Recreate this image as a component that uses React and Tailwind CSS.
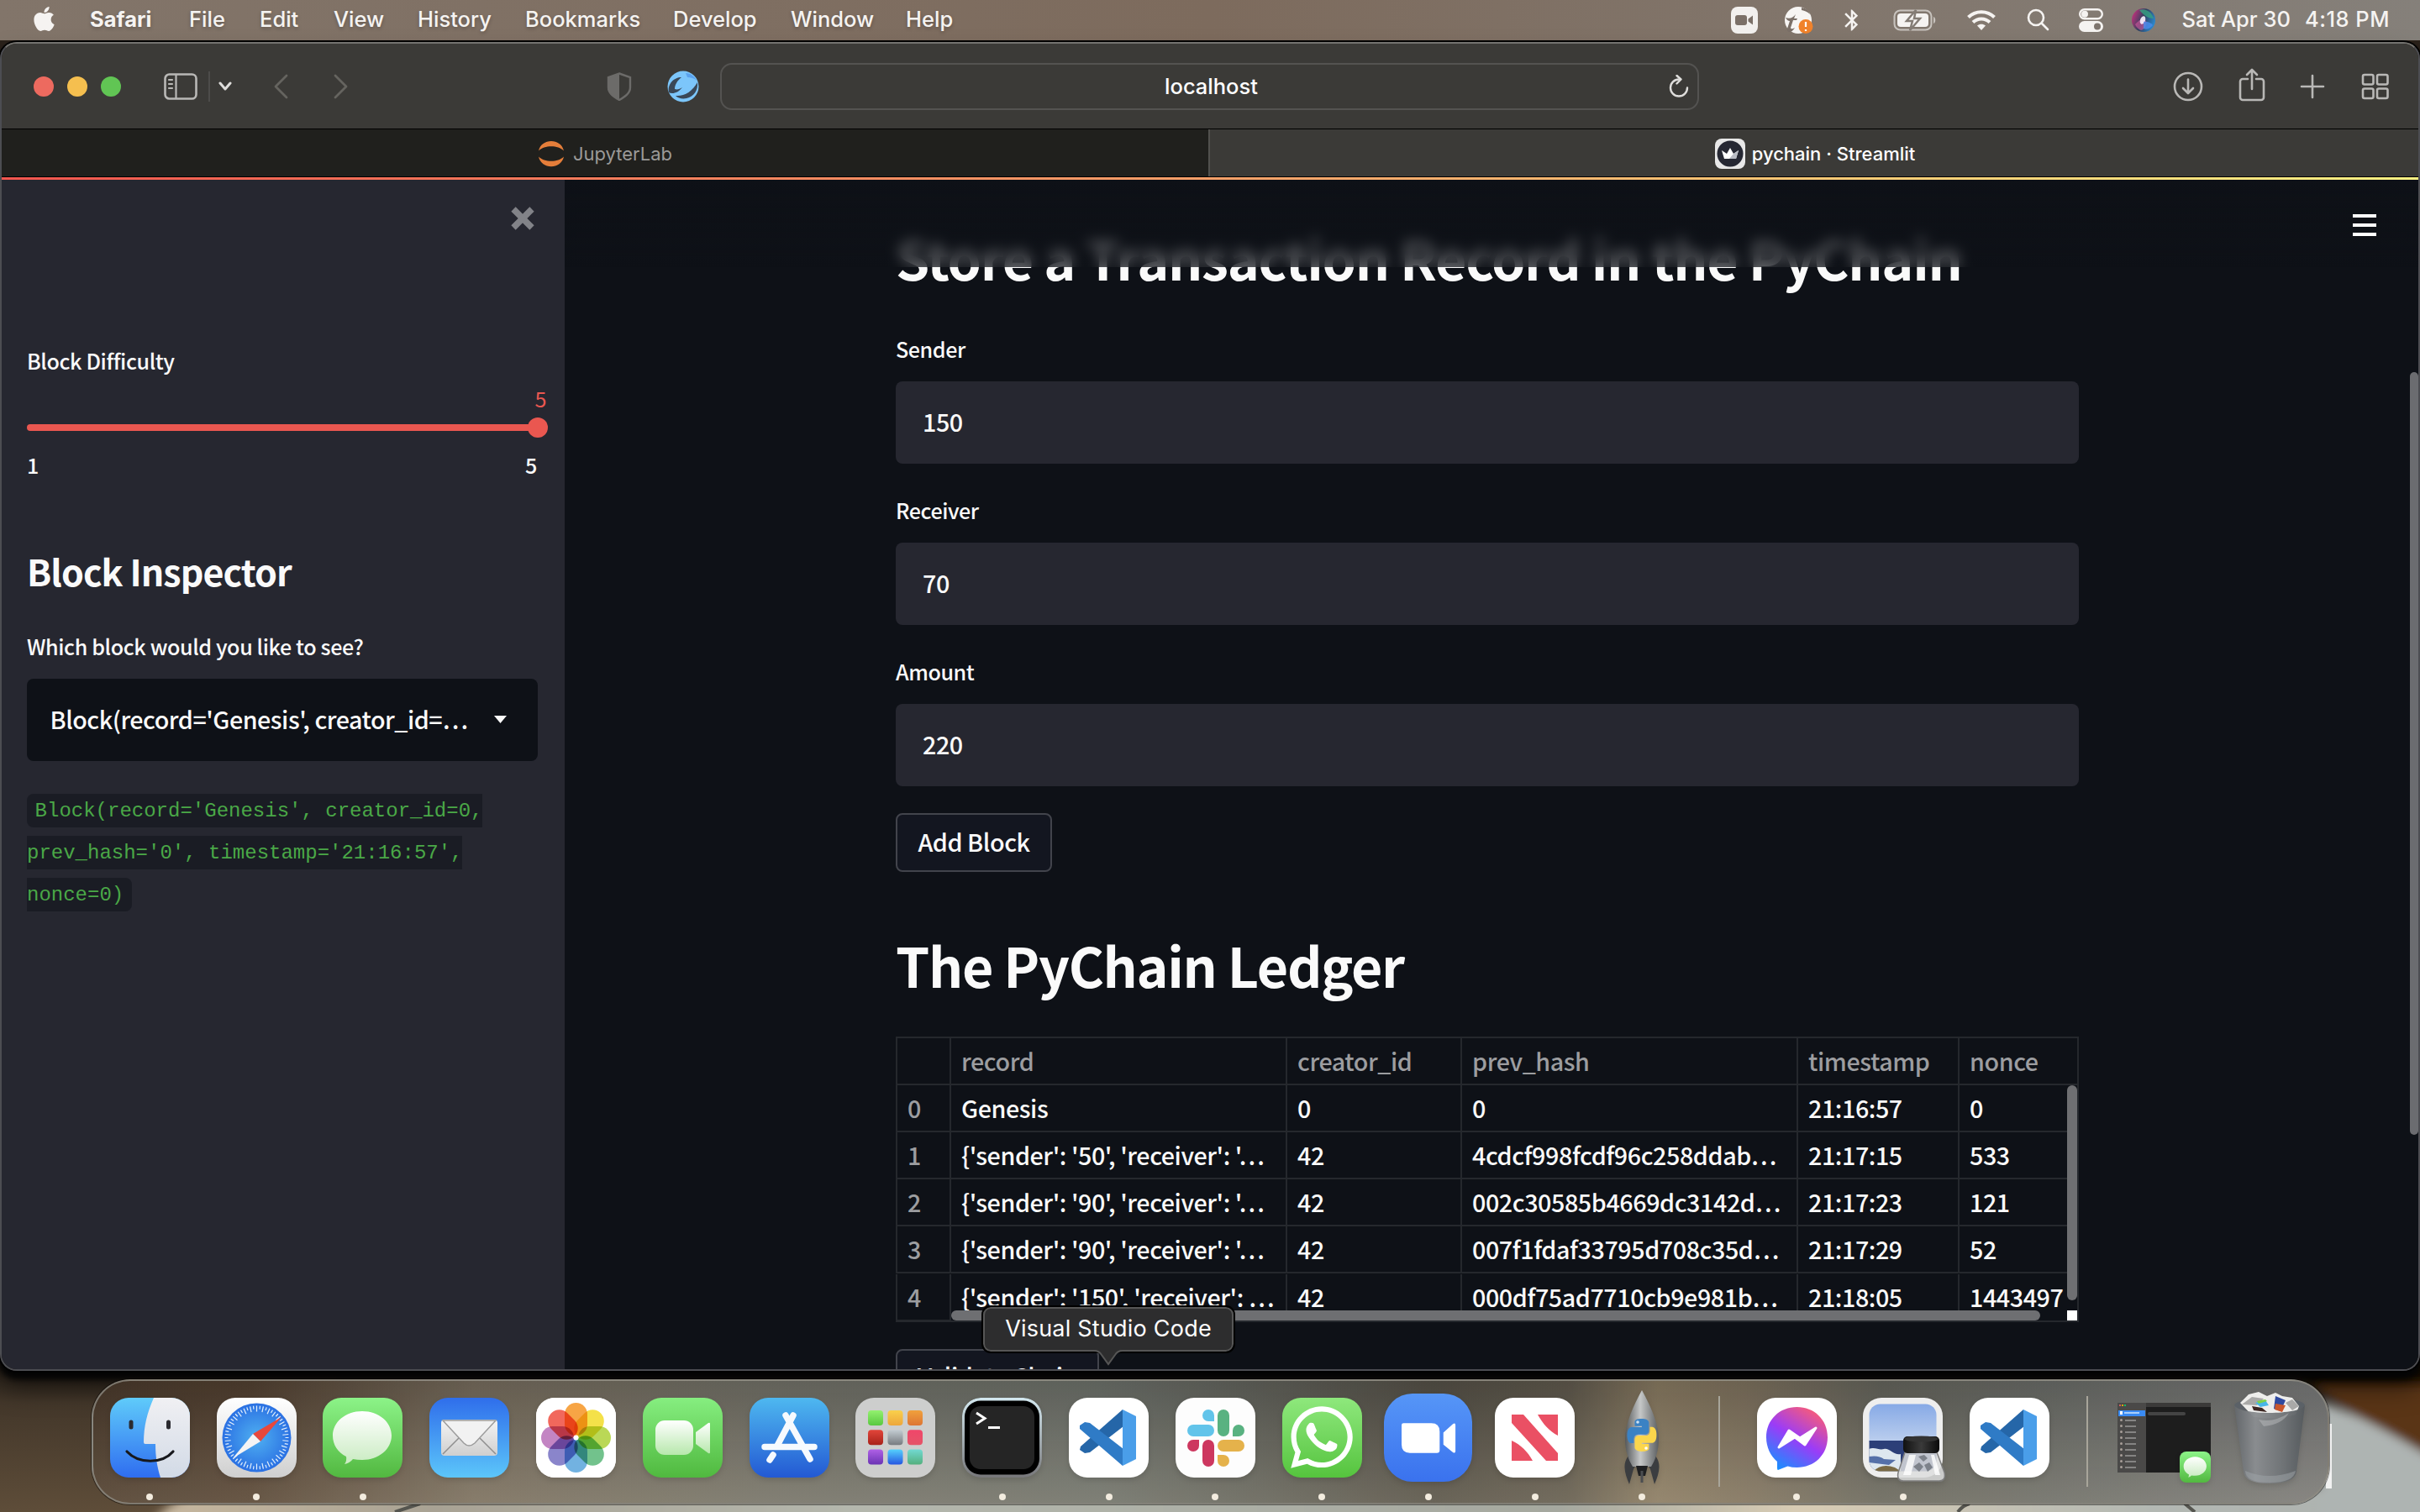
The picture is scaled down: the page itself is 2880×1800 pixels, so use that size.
import React from "react";
import { FaApple, FaWhatsapp } from "react-icons/fa";
import { MdBluetooth } from "react-icons/md";

const SANS = "font-['Noto_Sans_CJK_SC',sans-serif] font-medium tracking-[-0.015em]";

/* ---------- macOS menu bar ---------- */

const MENU = [
  ["Safari", "w-[118px] font-bold"],
  ["File", "w-[84px]"],
  ["Edit", "w-[88px]"],
  ["View", "w-[100px]"],
  ["History", "w-[128px]"],
  ["Bookmarks", "w-[176px]"],
  ["Develop", "w-[140px]"],
  ["Window", "w-[137px]"],
  ["Help", "w-[80px]"],
];

function MenuBar() {
  return (
    <header className="flex h-[48px] items-center bg-linear-to-r from-[#82756a] via-[#7d6b5d] to-[#85807a] pl-[40px] pr-[36px] pb-[1px] font-['Inter',sans-serif] text-[25.500px] font-medium text-[#f5f3f1]">
      <FaApple className="mb-[3px] size-[33px] -ml-[4px] mr-[38px]" />
      <nav className="flex [text-shadow:0_2px_4px_rgba(0,0,0,0.25)]">
        {MENU.map(([t, c]) => (
          <span key={t} className={c}>{t}</span>
        ))}
      </nav>
      <div className="ml-auto flex items-center">
        <svg width="32" height="32" viewBox="0 0 32 32" className="mr-[32px]">
          <rect width="32" height="32" rx="8" fill="#f2f0ee" />
          <rect x="5" y="10" width="14" height="12" rx="3" fill="#7b7068" />
          <path d="M20.500 14.500 26 10.500v11l-5.500-4z" fill="#7b7068" />
        </svg>
        <svg width="34" height="34" viewBox="0 0 34 34" className="mr-[31px]">
          <circle cx="16" cy="17" r="16" fill="#f7f5f3" />
          <path d="M20 2c6 1 9 4 10 8-3-3-6-4-10-5z" fill="#7b7068" />
          <path d="M1 14c5 2 9 0 12-4l-2 5h4l-1 2h-4l-3 9q0 2 3 1l2-1q-3 5-6 5-4 0-3-4l3-9q-3 0-5-4z" fill="#7b7068" />
          <circle cx="25" cy="24.500" r="8.500" fill="#f0822b" />
          <path d="M25 19v6M25 28v2" stroke="#fff" strokeWidth="2.200" />
        </svg>
        <MdBluetooth className="mr-[34px] h-[32px] w-[30px]" />
        <svg width="52" height="26" viewBox="0 0 52 26" className="mr-[36px]">
          <rect x="1.500" y="1.500" width="44" height="23" rx="7" fill="none" stroke="#c8c3be" strokeWidth="2" />
          <rect x="5" y="5" width="37" height="16" rx="4" fill="#f5f3f1" />
          <path d="M48 9c3 1 3 7 0 8z" fill="#c8c3be" />
          <path d="M27 1 16 14h7l-3 11 12-14h-7z" fill="#f5f3f1" stroke="#847c75" strokeWidth="2.500" />
        </svg>
        <svg width="34" height="26" viewBox="0 0 34 26" className="mr-[37px]" fill="none" stroke="#f5f3f1" strokeWidth="4">
          <path d="M1.500 9.500C10 1 24 1 32.500 9.500" />
          <path d="M7 15.500c5.500-5.500 14.500-5.500 20 0" />
          <path d="M12 19.500c3-2.500 7-2.500 10 0l-5 5.500z" fill="#f5f3f1" stroke="none" />
        </svg>
        <svg width="27" height="27" viewBox="0 0 27 27" className="mr-[35px]" fill="none" stroke="#f5f3f1" strokeWidth="2.600" strokeLinecap="round">
          <circle cx="11" cy="11" r="9" />
          <path d="m18 18 7 7" />
        </svg>
        <svg width="29" height="28" viewBox="0 0 29 28" className="mr-[33px]">
          <rect x="1.200" y="1.200" width="26.600" height="11" rx="5.500" fill="none" stroke="#f5f3f1" strokeWidth="2.400" />
          <circle cx="7" cy="6.700" r="4" fill="#f5f3f1" />
          <rect y="15" width="29" height="13" rx="6.500" fill="#f5f3f1" />
          <circle cx="22" cy="21.500" r="4" fill="#7e756e" />
        </svg>
        <svg width="30" height="30" viewBox="0 0 30 30" className="mr-[31px]">
          <defs>
            <linearGradient id="siri" x1="0" y1="0.300" x2="1" y2="0.700">
              <stop offset="0" stopColor="#c0327c" />
              <stop offset="0.450" stopColor="#32405e" />
              <stop offset="1" stopColor="#2a8fd8" />
            </linearGradient>
          </defs>
          <circle cx="15" cy="15" r="14" fill="url(#siri)" />
          <path d="M10 3c8-3 15 3 17 10-6 0-11-3-17-10z" fill="#36a383" opacity="0.800" />
          <path d="M5 20c5-6 10-8 13-4 2 4-2 10-6 11-3-1-6-4-7-7z" fill="#d9579f" opacity="0.600" />
          <ellipse cx="14" cy="15" rx="3" ry="5" fill="#fbf4ff" opacity="0.900" transform="rotate(20 14 15)" />
          <path d="M15 17c4-1 9 1 11 4-3 4-8 6-11 4z" fill="#4b8df0" opacity="0.800" />
        </svg>
        <span className="mr-[17px]">Sat Apr 30</span>
        <span className="tracking-[0.020em]">4:18 PM</span>
      </div>
    </header>
  );
}

/* ---------- Safari chrome ---------- */

function Toolbar() {
  const line = { fill: "none", stroke: "#b9b8b6", strokeWidth: 2.6, strokeLinecap: "round", strokeLinejoin: "round" };
  return (
    <div className="flex h-[102px] items-center border-b border-black bg-[#3b3a37] pl-[38px] pr-[34px]">
      <div className="flex gap-[16px]">
        <i className="size-[24px] rounded-full bg-[#ed6a5f]" />
        <i className="size-[24px] rounded-full bg-[#f5bf4f]" />
        <i className="size-[24px] rounded-full bg-[#61c554]" />
      </div>
      <svg width="40" height="32" viewBox="0 0 40 32" className="ml-[51px]" {...line}>
        <rect x="1.500" y="1.500" width="37" height="29" rx="5" />
        <path d="M14.500 2v28M6 8h4M6 13h4M6 18h4" strokeWidth="2.200" />
      </svg>
      <i className="ml-[13px] h-[36px] w-[2px] bg-[#4d4c4a]" />
      <svg width="16" height="12" viewBox="0 0 16 12" className="ml-[10px]" fill="none" stroke="#dedddb" strokeWidth="3" strokeLinecap="round" strokeLinejoin="round">
        <path d="m2 2 6 7 6-7" />
      </svg>
      <svg width="18" height="30" viewBox="0 0 18 30" className="ml-[49px]" fill="none" stroke="#65645f" strokeWidth="2.800" strokeLinecap="round" strokeLinejoin="round">
        <path d="M16 2 3 15l13 13" />
      </svg>
      <svg width="18" height="30" viewBox="0 0 18 30" className="ml-[54px]" fill="none" stroke="#65645f" strokeWidth="2.800" strokeLinecap="round" strokeLinejoin="round">
        <path d="m2 2 13 13L2 28" />
      </svg>
      <svg width="30" height="34" viewBox="0 0 30 34" className="ml-[307px]">
        <path d="M15 1.500 28 6v12c0 7-6 11-13 15C8 29 2 25 2 18V6z" fill="none" stroke="#6c6b69" strokeWidth="2.400" />
        <path d="M15 1.500V33C8 29 2 25 2 18V6z" fill="#6c6b69" />
      </svg>
      <svg width="38" height="38" viewBox="0 0 38 38" className="ml-[42px]">
        <circle cx="19" cy="19" r="18.500" fill="#7cc6fb" />
        <path d="M2 26C0 16 8 8 17 8c-5 4-8 9-8 14 3 1 6 0 9-2-4 5-8 7-12 7q-3 0-4-1z" fill="#3a4858" />
        <path d="M36 14c1 9-4 17-13 19-5 1-10 0-13-3 10 1 20-5 26-16z" fill="#3a4858" />
        <path d="M22 3c6 0 11 4 13 9-3-3-7-4-11-4z" fill="#5aa2ee" />
      </svg>
      <div className="ml-[25px] flex h-[56px] w-[1165px] items-center rounded-[14px] border-2 border-[#545351] font-['Inter',sans-serif] text-[25.500px] font-medium text-white">
        <span className="w-[38px]" />
        <span className="flex-1 pt-[2px] text-center">localhost</span>
        <svg width="24" height="28" viewBox="0 0 24 28" className="mr-[10px]" fill="none" stroke="#dedddb" strokeWidth="2.400" strokeLinecap="round" strokeLinejoin="round">
          <path d="M12 5.500a10 10 0 1 0 10 10" />
          <path d="m9.500 1 5 4.500-5 5" />
        </svg>
      </div>
      <div className="ml-auto flex items-center">
        <svg width="36" height="36" viewBox="0 0 36 36" {...line}>
          <circle cx="18" cy="18" r="16" />
          <path d="M18 9.500v16M12 20l6 6 6-6" />
        </svg>
        <svg width="32" height="40" viewBox="0 0 32 40" className="mb-[3px] ml-[42px]" {...line}>
          <path d="M11 13H5a3 3 0 0 0-3 3v19a3 3 0 0 0 3 3h22a3 3 0 0 0 3-3V16a3 3 0 0 0-3-3h-6M16 25V2M10 8l6-6 6 6" />
        </svg>
        <svg width="30" height="30" viewBox="0 0 30 30" className="ml-[41px]" {...line}>
          <path d="M15 2v26M2 15h26" />
        </svg>
        <svg width="34" height="32" viewBox="0 0 34 32" className="ml-[43px]" {...line}>
          <rect x="2" y="2" width="12.500" height="11.500" rx="2" />
          <rect x="19" y="2" width="12.500" height="11.500" rx="2" />
          <rect x="2" y="18.500" width="12.500" height="11.500" rx="2" />
          <rect x="19" y="18.500" width="12.500" height="11.500" rx="2" />
        </svg>
      </div>
    </div>
  );
}

function TabStrip() {
  return (
    <div className="flex h-[57px] border-b border-black font-['Inter',sans-serif] text-[22px]">
      <div className="flex w-[1436px] items-center justify-center bg-[#20201d] pt-[2px] text-[#9b9a98]">
        <svg width="32" height="32" viewBox="0 0 32 32" className="mr-[10px]">
          <path d="M1 12.500C4-3 28-3 31 12.500 24 5.500 8 5.500 1 12.500zM1 19.500C4 35 28 35 31 19.500 24 26.500 8 26.500 1 19.500z" fill="#e57e3a" />
        </svg>
        <span>JupyterLab</span>
      </div>
      <div className="flex flex-1 items-center justify-center border-l-2 border-[#52514e] bg-[#3b3a37] pt-[2px] pl-[2px] font-medium text-white">
        <svg width="36" height="36" viewBox="0 0 36 36" className="mr-[8px]">
          <rect width="36" height="36" rx="8" fill="#e8e8e8" />
          <circle cx="18" cy="18" r="15.500" fill="#262833" />
          <path d="m8 14 6 4 4-7 4 7 6-4-3 10H11z" fill="#fff" />
          <path d="M28 14l-6 4-5 6h8z" fill="#b9bcc4" />
        </svg>
        <span>pychain · Streamlit</span>
      </div>
    </div>
  );
}

/* ---------- Streamlit app ---------- */

function Sidebar() {
  return (
    <aside className={`${SANS} flex w-[670px] shrink-0 flex-col bg-[#262730] pl-[30px] pr-[32px] text-[25.100px] text-[#fafafa]`}>
      <div className="flex h-[92px] items-center justify-end pr-[4px]">
        <svg width="28" height="28" viewBox="0 0 28 28" stroke="#828388" strokeWidth="7.500">
          <path d="m3 3 22 22M25 3 3 25" />
        </svg>
      </div>
      <div className="mt-[103px] h-[40px] leading-[40px]">Block Difficulty</div>
      <div className="mt-[5px] -mr-[10px] h-[40px] text-right leading-[40px] font-normal text-[#ea5750]">5</div>
      <div className="mt-[3px] flex h-[24px] items-center">
        <div className="h-[8px] flex-1 rounded-l-[4px] bg-[#ea5750]" />
        <div className="-mr-[12px] -ml-[12px] size-[24px] rounded-full bg-[#ea5750]" />
      </div>
      <div className="mt-[12px] flex h-[40px] justify-between pr-[1px] leading-[40px]">
        <span>1</span>
        <span>5</span>
      </div>
      <h2 className="mt-[76px] h-[60px] text-[43px] leading-[60px] font-bold tracking-[-0.022em]">Block Inspector</h2>
      <div className="mt-[40px] h-[40px] leading-[40px]">Which block would you like to see?</div>
      <div className="mt-[19px] flex h-[98px] items-center justify-between rounded-[8px] bg-[#0e1117] pr-[37px] pb-[2px] pl-[27.500px] text-[28.700px] tracking-[-0.017em]">
        <span>Block(record='Genesis', creator_id=…</span>
        <svg width="15" height="9" viewBox="0 0 15 9">
          <path d="M0 0h15L7.500 9z" fill="#fafafa" />
        </svg>
      </div>
      <p className="mt-[35px] font-['Liberation_Mono',monospace] text-[24px] leading-[50px] font-normal tracking-normal">
        <code className="rounded-[8px] bg-[#1a1c24] px-[9.600px] pt-[7px] pb-[6px] font-['Liberation_Mono',monospace] text-[#4aa847]">
          Block(record='Genesis', creator_id=0, prev_hash='0', timestamp='21:16:57', nonce=0)
        </code>
      </p>
    </aside>
  );
}

function Field({ label, value, className }) {
  return (
    <div className={className}>
      <div className="h-[40px] text-[25.100px] leading-[40px]">{label}</div>
      <div className="mt-[19px] flex h-[98px] items-center rounded-[8px] bg-[#262730] pb-[3px] pl-[32px]">{value}</div>
    </div>
  );
}

const ROWS = [
  ["0", "Genesis", "0", "0", "21:16:57", "0"],
  ["1", "{'sender': '50', 'receiver': '…", "42", "4cdcf998fcdf96c258ddab…", "21:17:15", "533"],
  ["2", "{'sender': '90', 'receiver': '…", "42", "002c30585b4669dc3142d…", "21:17:23", "121"],
  ["3", "{'sender': '90', 'receiver': '…", "42", "007f1fdaf33795d708c35d…", "21:17:29", "52"],
  ["4", "{'sender': '150', 'receiver': …", "42", "000df75ad7710cb9e981b…", "21:18:05", "1443497"],
];

function Ledger() {
  const grid = "grid grid-cols-[64px_400px_208px_400px_192px_142px] h-[56px] leading-[54px] last-of-type:leading-[56px] whitespace-nowrap";
  const cell = "border-l-2 border-b-2 border-[#25282d] pl-[12px]";
  return (
    <div className="relative mt-[46px] h-[340px] w-[1408px] overflow-hidden border-2 border-l-0 border-[#25282d]">
      <div className={`${grid} text-[#9c9da0]`}>
        {["", "record", "creator_id", "prev_hash", "timestamp", "nonce"].map((h) => (
          <div key={h} className={cell}>{h}</div>
        ))}
      </div>
      {ROWS.map((row) => (
        <div key={row[0]} className={row[0] === "4" ? `${grid} pt-[1px]` : grid}>
          {row.map((v, i) => (
            <div key={i} className={i === 0 ? `${cell} text-[#9c9da0]` : cell}>{v}</div>
          ))}
        </div>
      ))}
      <div className="absolute top-[56px] right-0 h-[256px] w-[12px] rounded-full bg-[#6e6f72]" />
      <div className="absolute bottom-0 left-[66px] h-[12px] w-[1340px] bg-[#0e1117]" />
      <div className="absolute bottom-0 left-[66px] h-[12px] w-[1296px] rounded-full bg-[#6e6f72]" />
      <div className="absolute right-0 bottom-0 size-[12px] bg-white" />
    </div>
  );
}

function Main() {
  return (
    <main className={`${SANS} relative flex-1 overflow-hidden bg-[#0e1117] pt-[52px] pl-[394px] text-[28.700px] text-[#fafafa]`}>
      <div className="flex w-[1408px] flex-col">
        <h1 className="h-[80px] text-[64.500px] leading-[80px] font-bold tracking-[-0.020em] whitespace-nowrap">
          Store a Transaction Record in the PyChain
        </h1>
        <Field className="mt-[49px]" label="Sender" value="150" />
        <Field className="mt-[35px]" label="Receiver" value="70" />
        <Field className="mt-[35px]" label="Amount" value="220" />
        <button className="mt-[32px] flex h-[70px] w-[186px] items-center justify-center rounded-[8px] border-2 border-[#42444c] bg-[#131620] pb-[2px]">
          Add Block
        </button>
        <h1 className="mt-[70px] h-[80px] text-[64.500px] leading-[80px] font-bold tracking-[-0.021em]">The PyChain Ledger</h1>
        <Ledger />
        <button className="mt-[32px] flex h-[70px] w-[242px] shrink-0 items-center justify-center rounded-[8px] border-2 border-[#42444c] bg-[#131620] pb-[7px]">
          Validate Chain
        </button>
      </div>
      <div className="absolute inset-x-0 top-0 flex h-[104px] justify-end bg-linear-to-b from-[#0e1117] to-[#0e1117]/65 pt-[41px] pr-[50px] backdrop-blur-[8px]">
        <div className="flex h-[26px] w-[28px] flex-col justify-between">
          <i className="h-[4px] bg-white" />
          <i className="h-[4px] bg-white" />
          <i className="h-[4px] bg-white" />
        </div>
      </div>
      <div className="absolute top-[229px] right-0 h-[908px] w-[10px] rounded-full bg-[#6b6c70]" />
    </main>
  );
}

/* ---------- Dock ---------- */

function Tile({ children, size = "size-[95px]", className = "" }) {
  return (
    <svg viewBox="0 0 95 95" className={`${size} shrink-0 overflow-hidden rounded-[22px] drop-shadow-md ${className}`}>
      {children}
    </svg>
  );
}

function Grad({ id, from, to }) {
  return (
    <linearGradient id={id} x1="0" y1="0" x2="0" y2="1">
      <stop offset="0" stopColor={from} />
      <stop offset="1" stopColor={to} />
    </linearGradient>
  );
}

function Finder() {
  return (
    <Tile>
      <defs>
        <Grad id="fb" from="#5fcbfa" to="#2f6df0" />
        <Grad id="fw" from="#f0f0f3" to="#d2dae6" />
      </defs>
      <rect width="95" height="95" fill="url(#fb)" />
      <path d="M52 0C44 18 40 34 40 53q0 2 2 2h12c0 15 2 28 6 40h35V0z" fill="url(#fw)" />
      <path d="M25 29v6M69.500 29v6" stroke="#2b2b30" strokeWidth="5" strokeLinecap="round" />
      <path d="M20 64c14 15 42 15 55 0" fill="none" stroke="#17181c" strokeWidth="3.200" strokeLinecap="round" />
    </Tile>
  );
}

function Safari() {
  return (
    <Tile>
      <defs>
        <Grad id="sw" from="#ffffff" to="#cfcfcf" />
        <radialGradient id="sb"><stop offset="0" stopColor="#4fb0f1" /><stop offset="1" stopColor="#2b71e3" /></radialGradient>
      </defs>
      <rect width="95" height="95" fill="url(#sw)" />
      <circle cx="47.500" cy="47.500" r="41" fill="url(#sb)" />
      {Array.from({ length: 60 }, (_, i) => (
        <path key={i} d={i % 2 ? "M47.5 9.500v4" : "M47.5 9.500v7"} stroke="#e4f1fd" strokeWidth="1.200" transform={`rotate(${i * 6} 47.5 47.5)`} />
      ))}
      <path d="M77 23 43 43l9 9z" fill="#e8483c" />
      <path d="M19 72 43 43l9 9z" fill="#f4f4f4" />
    </Tile>
  );
}

function Messages({ size }) {
  return (
    <Tile size={size}>
      <defs>
        <Grad id="mg" from="#8cf388" to="#52b840" />
        <Grad id="mb" from="#ffffff" to="#c9ebc1" />
      </defs>
      <rect width="95" height="95" fill="url(#mg)" />
      <path d="M47 16c20 0 35 13 35 29S67 74 47 74q-6 0-11-1-4 5-10 6 3-4 2-9C18 65 12 56 12 45c0-16 15-29 35-29z" fill="url(#mb)" />
    </Tile>
  );
}

function Mail() {
  return (
    <Tile>
      <defs>
        <Grad id="ml" from="#2f6eeb" to="#5cc6fa" />
        <Grad id="me" from="#f4f4f4" to="#cfcfcf" />
      </defs>
      <rect width="95" height="95" fill="url(#ml)" />
      <rect x="14" y="26" width="67" height="43" rx="4" fill="url(#me)" />
      <path d="m16 67 19-19M79 67 60 48" stroke="#8e8e8e" strokeWidth="1.500" />
      <path d="m16 27 25 27q6 6 13 0l25-27z" fill="#f2f2f2" stroke="#9c9c9c" strokeWidth="1.500" />
    </Tile>
  );
}

const PETALS = ["#f79b30", "#f3de35", "#b3d443", "#62bb80", "#62aade", "#7d78c6", "#bd78bd", "#f0574a"];

function Photos() {
  return (
    <Tile className="isolate bg-white">
      <rect width="95" height="95" fill="#fff" />
      {PETALS.map((c, i) => (
        <rect key={c} x="34" y="6" width="27" height="39" rx="13.500" fill={c} opacity="0.900" className="mix-blend-multiply" transform={`rotate(${i * 45} 47.5 47.5)`} />
      ))}
      <circle cx="47.500" cy="47.500" r="3" fill="#fff" />
    </Tile>
  );
}

function FaceTime() {
  return (
    <Tile>
      <defs>
        <Grad id="fg" from="#86ee80" to="#50b93f" />
        <Grad id="fc" from="#ffffff" to="#b7e8ac" />
      </defs>
      <rect width="95" height="95" fill="url(#fg)" />
      <rect x="15" y="27" width="45" height="41" rx="11" fill="url(#fc)" />
      <path d="M63 41 78 30q2-1 2 1v34q0 2-2 1L63 55z" fill="url(#fc)" />
    </Tile>
  );
}

function AppStore() {
  return (
    <Tile>
      <defs><Grad id="as" from="#4eb8f0" to="#2359d3" /></defs>
      <rect width="95" height="95" fill="url(#as)" />
      <g stroke="#f6fafe" strokeWidth="7.500" strokeLinecap="round">
        <path d="M18 58.500h59M52 21 33 57M43 21l29 52M28 68l-4 6" />
      </g>
    </Tile>
  );
}

const PADS = [
  ["#93f16f", "#59c840"], ["#f9d04c", "#eda63a"], ["#f0a13c", "#dd7534"],
  ["#e2453a", "#a8221a"], ["#c3ccd2", "#777b80"], ["#f0466a", "#e55468"],
  ["#b061e6", "#6b34b4"], ["#55d2fc", "#2657e2"], ["#72d9d2", "#54b07e"],
];

function Launchpad() {
  return (
    <Tile>
      <rect width="95" height="95" fill="#cdcecd" />
      {PADS.map(([a, b], i) => (
        <g key={a}>
          <defs><Grad id={"lp" + i} from={a} to={b} /></defs>
          <rect x={15 + (i % 3) * 23.500} y={15 + Math.floor(i / 3) * 23.200} width="18" height="18" rx="4" fill={`url(#lp${i})`} />
        </g>
      ))}
    </Tile>
  );
}

function Terminal() {
  return (
    <Tile>
      <defs><Grad id="tm" from="#d3e8ef" to="#77777a" /></defs>
      <rect width="95" height="95" rx="22" fill="url(#tm)" />
      <rect x="3" y="3.500" width="89" height="88" rx="19" fill="#000" />
      <rect x="9" y="10" width="77" height="75" rx="13" fill="#252525" />
      <path d="m17 18 10 6.500L17 31" fill="none" stroke="#fff" strokeWidth="3" />
      <path d="M31 35.500h14" stroke="#fff" strokeWidth="3" />
    </Tile>
  );
}

function VSCode() {
  return (
    <Tile>
      <rect width="95" height="95" fill="#fff" />
      <path d="M64 14 14 58l-1 4 6 4 6-1 40-31z" fill="#2566a8" />
      <path d="M64 81 13 37v-4l6-4 6 1 40 31z" fill="#2f7bc6" />
      <path d="M64 14 80 22v51l-16 8z" fill="#4a9ee9" />
    </Tile>
  );
}

function Slack() {
  return (
    <Tile>
      <rect width="95" height="95" fill="#fdfdfd" />
      <g fill="#62c4ea">
        <rect x="14" y="32" width="32" height="14" rx="7" />
        <path d="M39 14a7 7 0 0 1 7 7v7h-7a7 7 0 0 1 0-14z" />
      </g>
      <g fill="#59b281">
        <rect x="50" y="14" width="14" height="32" rx="7" />
        <path d="M82 39a7 7 0 0 1-7 7h-7v-7a7 7 0 0 1 14 0z" />
      </g>
      <g fill="#e5b24b">
        <rect x="50" y="50" width="32" height="14" rx="7" />
        <path d="M57 82a7 7 0 0 1-7-7v-7h7a7 7 0 0 1 0 14z" />
      </g>
      <g fill="#cd375f">
        <rect x="32" y="50" width="14" height="32" rx="7" />
        <path d="M14 57a7 7 0 0 1 7-7h7v7a7 7 0 0 1-14 0z" />
      </g>
    </Tile>
  );
}

function WhatsApp() {
  return (
    <div className="flex size-[95px] items-center justify-center rounded-[22px] bg-linear-to-b from-[#8ee87c] to-[#55c43d] drop-shadow-md">
      <FaWhatsapp className="size-[84px] text-white" />
    </div>
  );
}

function Zoom() {
  return (
    <Tile size="size-[105px]" className="rounded-[34px]">
      <defs><Grad id="zm" from="#5696f7" to="#3a72ee" /></defs>
      <rect width="95" height="95" fill="url(#zm)" />
      <path d="M19 34q0-2 2-2h30q9 0 9 9v20q0 3-3 3H28q-9 0-9-9zM64 42l10-9q3-2 3 1v28q0 3-3 1l-10-8z" fill="#fff" />
    </Tile>
  );
}

function News() {
  return (
    <Tile>
      <rect width="95" height="95" fill="#fff" />
      <path d="M20 20h14l41 46v9H61L20 30z" fill="#ea5064" />
      <path d="M51 20h24v25C65 40 57 31 51 20zM20 51c11 5 19 13 25 24H20z" fill="#ea5064" />
    </Tile>
  );
}

const SNAKE =
  "M14.250.18l.9.2.73.26.59.3.45.32.34.34.25.34.16.33.1.3.04.26.02.2-.01.13V8.500l-.05.63-.13.55-.21.46-.26.38-.3.31-.33.25-.35.19-.35.14-.33.1-.3.07-.26.04-.21.02H8.770l-.69.05-.59.14-.5.22-.41.27-.33.32-.27.35-.2.36-.15.37-.1.35-.07.32-.04.27-.02.21v3.060H3.170l-.21-.03-.28-.07-.32-.12-.35-.18-.36-.26-.36-.36-.35-.46-.32-.59-.28-.73-.21-.88-.14-1.050-.05-1.230.06-1.220.16-1.040.24-.87.32-.71.36-.57.4-.44.42-.33.42-.24.4-.16.36-.1.32-.05.24-.01h.16l.06.01h8.160v-.83H6.180l-.01-2.750-.02-.37.05-.34.11-.31.17-.28.25-.26.31-.23.38-.2.44-.18.51-.15.58-.12.64-.1.71-.06.77-.04.84-.02 1.270.05z";

function Rocket() {
  return (
    <svg viewBox="0 0 44 113" className="h-[113px] w-[44px] drop-shadow-md">
      <defs>
        <linearGradient id="rk">
          <stop offset="0" stopColor="#55585a" />
          <stop offset="0.450" stopColor="#c6c8c8" />
          <stop offset="1" stopColor="#5b5e60" />
        </linearGradient>
      </defs>
      <path d="M6 78C-2 88 2 100 7 112l5-18 5-8zM38 78c8 10 4 22-1 34l-5-18-5-8z" fill="#3b3d40" />
      <path d="M22 0c10 18 20 40 20 58 0 14-4 25-9 33H11C6 83 2 72 2 58 2 40 12 18 22 0z" fill="url(#rk)" />
      <path d="M15 90h14l-3 12h-8z" fill="#1f2022" />
      <path d="M22 96v14" stroke="#4b4d50" strokeWidth="3" />
      <g transform="translate(4.500 34) scale(1.450 1.620)">
        <path d={SNAKE} fill="#3b82c4" />
        <path d={SNAKE} fill="#fbd64c" transform="rotate(180 12 12)" />
      </g>
      <circle cx="17" cy="38" r="1.800" fill="#cfe2f3" />
      <circle cx="27" cy="69" r="1.800" fill="#fff" />
    </svg>
  );
}

function Messenger() {
  return (
    <Tile>
      <defs>
        <linearGradient id="ms" x1="0.200" y1="1" x2="0.800" y2="0">
          <stop offset="0" stopColor="#1690ff" />
          <stop offset="0.500" stopColor="#9b3cf7" />
          <stop offset="1" stopColor="#ff5e6f" />
        </linearGradient>
      </defs>
      <rect width="95" height="95" fill="#fff" />
      <path d="M47.500 11C68 11 84 26 84 47S68 83 47.500 83q-6 0-11-1.500L25 86q-1 0-1-2v-8C16 69 11 59 11 47c0-21 16-36 36.500-36z" fill="url(#ms)" />
      <path d="m26 59 12-20 13 9 19-12-13 20-12-9z" fill="#fff" stroke="#fff" strokeWidth="3" strokeLinejoin="round" />
    </Tile>
  );
}

function Preview() {
  return (
    <svg viewBox="0 0 100 100" className="-mr-[4px] mt-[5px] h-[100px] w-[100px] shrink-0 drop-shadow-md">
      <defs>
        <Grad id="sky" from="#86a9e6" to="#bccfee" />
        <linearGradient id="cap"><stop offset="0" stopColor="#111" /><stop offset="0.500" stopColor="#3a3a3a" /><stop offset="1" stopColor="#0a0a0a" /></linearGradient>
        <clipPath id="pic"><rect x="7.500" y="7.500" width="80" height="80" rx="13" /></clipPath>
      </defs>
      <rect width="95" height="95" rx="22" fill="#eeeeee" />
      <g clipPath="url(#pic)">
        <rect x="7" y="7" width="82" height="46" fill="url(#sky)" />
        <rect x="7" y="51" width="82" height="38" fill="#2c3f78" />
        <path d="M7 61c8-3 12 2 18 0s12 8 20 6v22H7z" fill="#dde7ef" />
        <path d="M7 70q12-2 18 3l14 1-8 6-24-3z" fill="#5570a8" />
        <path d="M12 88q10-11 26-5l8 5z" fill="#7a6a44" />
      </g>
      <path d="M50 65h38l9 24q2 10-6 10H48q-8 0-6-10z" fill="#dcdddd" fillOpacity="0.850" stroke="#7d7d7d" strokeWidth="1.500" />
      <path d="M55 68h8l-6 24H48zM81 68h4l7 24h-6z" fill="#fff" opacity="0.800" />
      <path d="m66 70 7-2 4 4-5 4zM60 82l7-5 5 5-5 6zM73 80l6-3 4 6-6 5z" fill="#7d828a" />
      <rect x="48" y="46" width="43" height="20" rx="5" fill="url(#cap)" />
      <ellipse cx="69.500" cy="49" rx="20" ry="3.500" fill="#333" />
    </svg>
  );
}

function MiniWindow() {
  return (
    <div className="flex h-[83px] w-[111px] shrink-0 bg-[#1d1d1d]">
      <div className="flex w-[34px] flex-col gap-[3px] bg-[#4a4948] px-[1px] pt-[2px]">
        <div className="flex gap-[1px] pl-[1px]">
          <i className="size-[2px] rounded-full bg-red-400" />
          <i className="size-[2px] rounded-full bg-yellow-400" />
          <i className="size-[2px] rounded-full bg-green-400" />
        </div>
        <div className="mt-[2px] flex h-[7px] shrink-0 items-center gap-[2px] bg-[#3a8bf3] pl-[2px]">
          <i className="h-[4px] w-[3px] bg-white" />
          <i className="h-[2px] w-[18px] bg-[#a9cffb]" />
        </div>
        {[0, 1, 2, 3, 4, 5, 6, 7, 8].map((n) => (
          <div key={n} className="flex h-[4px] items-center gap-[3px] pl-[2px]">
            <i className="size-[3px] rounded-full bg-[#a89f99]" />
            <i className="h-[2px] w-[13px] bg-[#858483]" />
          </div>
        ))}
      </div>
      <div className="flex-1">
        <div className="h-[5px] bg-[#3b3a39]" />
        <div className="mx-[2px] mt-[6px] h-[4px] w-[45px] rounded-full bg-[#444]" />
      </div>
    </div>
  );
}

function Trash() {
  return (
    <svg viewBox="0 0 86 111" className="mr-[5px] h-[111px] w-[86px] drop-shadow-md">
      <defs>
        <linearGradient id="tr">
          <stop offset="0" stopColor="#63676b" />
          <stop offset="0.300" stopColor="#8b8e91" />
          <stop offset="0.700" stopColor="#6f7376" />
          <stop offset="1" stopColor="#555a5e" />
        </linearGradient>
      </defs>
      <ellipse cx="43" cy="17" rx="42" ry="9" fill="#5b6167" />
      <path d="m8 14 10-10 12-3 10 5 10-4 8 4 12 2 8 10-4 10-20 5-30-2z" fill="#eeeeec" />
      <path d="m10 16 12-9 14 2-8 8zM62 14l8-4 8 8-8 5z" fill="#a9a9a8" />
      <path d="m26 14 12-3 4 6-10 2z" fill="#48b6e8" />
      <path d="m28 12 10-2 2 2-10 3z" fill="#7ed348" />
      <path d="m50 6 12 5-6 13-8-3z" fill="#2f4aa0" />
      <path d="m50 15 12 2-4 8-9-3z" fill="#c9572c" />
      <path d="m22 18 12 2 6 5-16-2z" fill="#3c2723" />
      <path d="M1 17c6 12 78 12 84 0L75 96q-2 14-32 14T12 96z" fill="url(#tr)" fillOpacity="0.960" />
      <path d="M30 34q18 4 36-8-8 14-30 16z" fill="#b9bcbe" opacity="0.500" />
      <path d="M14 95q28 12 60 0-2 14-31 14T14 95z" fill="#9fa5aa" opacity="0.500" />
    </svg>
  );
}

function Slot({ children, running }) {
  return (
    <div className="flex w-[126.800px] flex-col items-center">
      <div className="flex h-[134px] w-full items-center justify-center">{children}</div>
      {running && <i className="size-[8px] rounded-full bg-[#f3ecdf]" />}
    </div>
  );
}

function Divider() {
  return <i className="mx-[28px] mt-[18px] h-[108px] w-[2px] bg-[#a8a59a]" />;
}

function Tooltip() {
  return (
    <div className="absolute -top-[88px] left-[1059px] flex flex-col items-center">
      <div className="flex h-[53px] w-[298px] items-center justify-center rounded-[9px] border-2 border-[#565656] bg-[#2d2d2e] font-['Inter',sans-serif] text-[27px] tracking-[0.008em] text-white outline-2 outline-black">
        Visual Studio Code
      </div>
      <svg width="36" height="19" viewBox="0 0 36 19" className="-mt-[2px]">
        <path d="M1 0q6 0 9 6l8 11 8-11q3-6 9-6z" fill="#2d2d2e" />
        <path d="M1 1q6 0 9 5l8 11 8-11q3-5 9-5" fill="none" stroke="#565656" strokeWidth="2" />
      </svg>
    </div>
  );
}

function Dock() {
  return (
    <div className="relative mt-[10px] ml-[109px] flex h-[149px] w-[2663px] rounded-[46px] border-2 border-[#8d8b82]/80 bg-[linear-gradient(to_bottom,rgba(0,0,0,0.12),rgba(255,240,210,0.14)),linear-gradient(to_right,#48382a_0%,#503f30_7%,#746a5b_17%,#6f6e65_30%,#6a6e68_45%,#5f6059_52%,#524e45_60%,#5d574b_66%,#85775f_70%,#7a6e5b_74%,#62625a_80%,#686a66_88%,#757676_100%)] pl-[4px] shadow-[0_0_0_1px_rgba(0,0,0,0.45)]">
      <Slot running><Finder /></Slot>
      <Slot running><Safari /></Slot>
      <Slot running><Messages /></Slot>
      <Slot><Mail /></Slot>
      <Slot><Photos /></Slot>
      <Slot><FaceTime /></Slot>
      <Slot><AppStore /></Slot>
      <Slot><Launchpad /></Slot>
      <Slot running><Terminal /></Slot>
      <Slot running><VSCode /></Slot>
      <Slot running><Slack /></Slot>
      <Slot running><WhatsApp /></Slot>
      <Slot running><Zoom /></Slot>
      <Slot running><News /></Slot>
      <Slot running><Rocket /></Slot>
      <Divider />
      <Slot running><Messenger /></Slot>
      <Slot running><Preview /></Slot>
      <Slot><VSCode /></Slot>
      <Divider />
      <Slot>
        <div className="relative mr-[3px]">
          <MiniWindow />
          <div className="absolute right-0 -bottom-[12px] flex">
            <Messages size="size-[37px] !rounded-[8px]" />
          </div>
        </div>
      </Slot>
      <Slot><Trash /></Slot>
      <Tooltip />
    </div>
  );
}

function Wallpaper() {
  return (
    <svg viewBox="0 0 2880 1800" className="absolute inset-0 size-full">
      <defs>
        <linearGradient id="wl" x1="0" y1="0" x2="0" y2="1">
          <stop offset="0" stopColor="#14100c" />
          <stop offset="0.350" stopColor="#43372a" />
          <stop offset="1" stopColor="#5e4d39" />
        </linearGradient>
        <linearGradient id="wb">
          <stop offset="0" stopColor="#c7b79e" />
          <stop offset="0.120" stopColor="#a8a294" />
          <stop offset="0.300" stopColor="#b4b7ad" />
          <stop offset="0.600" stopColor="#a5a89f" />
          <stop offset="0.700" stopColor="#d8ccb4" />
          <stop offset="0.850" stopColor="#b3b8b3" />
          <stop offset="1" stopColor="#a9aeac" />
        </linearGradient>
        <filter id="soft"><feGaussianBlur stdDeviation="6" /></filter>
      </defs>
      <rect width="2880" height="1800" fill="#2a211a" />
      <rect y="1600" width="400" height="200" fill="url(#wl)" />
      <g filter="url(#soft)">
        <path d="M180 1815q20-30 70-45h2730v90H180z" fill="url(#wb)" />
        <path d="M2700 1600h220v160l-140-90z" fill="#5a3512" />
        <path d="M2740 1600h180v48h-180z" fill="#120b06" />
        <path d="M2760 1668q60 20 160 84v110h-160z" fill="#aeb4b2" />
      </g>
      <path d="M2768 1695h7v77h-7z" fill="#f1f1f1" />
      <path d="M2330 1800q6-8 14-10M2600 1790l12 10M470 1800l30-10" stroke="#55554f" strokeWidth="4" />
    </svg>
  );
}

export default function App() {
  return (
    <div className="relative isolate h-[1800px] w-[2880px] overflow-hidden bg-black">
      <Wallpaper />
      <div className="relative flex h-full flex-col">
        <MenuBar />
        <div className="mt-[2px] flex h-[1582px] flex-col overflow-hidden rounded-[20px] border-2 border-[#4c4d52] border-t-[#747370] shadow-[0_0_0_2px_#000,0_8px_6px_2px_#050505,0_20px_30px_rgba(0,0,0,0.5)]">
          <Toolbar />
          <TabStrip />
          <div className="h-[3px] shrink-0 bg-linear-to-r from-[#f2564f] via-[#f9a069] to-[#fdf283]" />
          <div className="flex min-h-0 flex-1">
            <Sidebar />
            <Main />
          </div>
        </div>
        <Dock />
      </div>
    </div>
  );
}
